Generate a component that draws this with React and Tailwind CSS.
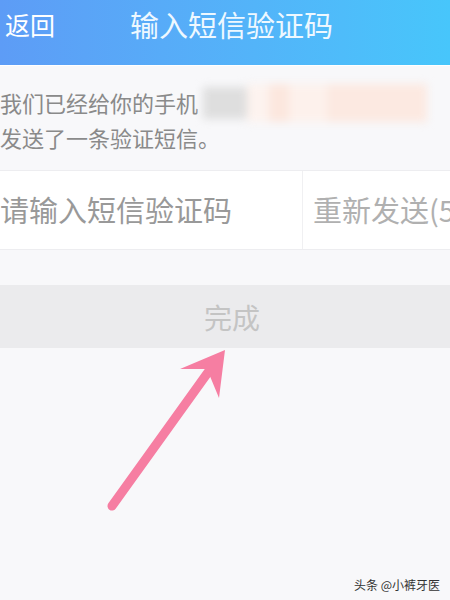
import React from 'react';

const FONT = { fontFamily: '"Noto Sans CJK SC", "Noto Sans", sans-serif' };

function Arrow() {
  // 粉色箭头指向“完成”按钮
  return (
    <svg className="absolute left-0 top-0" width="450" height="600" viewBox="0 0 450 600">
      <line x1="112" y1="506" x2="214" y2="364" stroke="#f67ea2" strokeWidth="9" strokeLinecap="round" />
      <path d="M225 350 L180 369 L207 369 L219 398 Z" fill="#f67ea2" />
    </svg>
  );
}

export default function App() {
  return (
    <div className="relative w-[450px] h-[600px] overflow-hidden bg-[#f8f8fa]" style={FONT}>
      {/* 顶部导航 */}
      <div className="h-[65px] bg-gradient-to-r from-[#5d9cf6] to-[#47c6fb] flex items-start pt-[6px]">
        <span className="w-[130px] pl-[5px] text-[25px] leading-[36px] text-white">返回</span>
        <span className="text-[29px] leading-[36px] text-[#eef8ff]">输入短信验证码</span>
      </div>
      <div className="h-px bg-white" />

      {/* 提示文字 */}
      <div className="h-[104px] pt-[19px] text-[22px] leading-[35px] text-[#8a8a8a]">
        <div className="flex items-center h-[35px]">
          <span className="shrink-0">我们已经给你的手机</span>
          <div className="flex items-center h-[35px] blur-[4px] ml-[5px]">
            <div className="w-[44px] h-[32px] bg-[#dedede]" />
            <div className="w-[22px] h-[38px] bg-[#fdf3ef]" />
            <div className="w-[20px] h-[38px] bg-[#fce7de]" />
            <div className="w-[38px] h-[38px] bg-[#fdf1ec]" />
            <div className="w-[100px] h-[38px] bg-[#fce9e1]" />
          </div>
        </div>
        <div>发送了一条验证短信。</div>
      </div>

      {/* 输入验证码 */}
      <div className="h-[80px] flex bg-white border-t border-b border-[#ededf0] overflow-hidden">
        <div className="w-[302px] shrink-0 flex items-center text-[29px] text-[#999999]">请输入短信验证码</div>
        <div className="w-px shrink-0 bg-[#f0f0f2]" />
        <div className="flex-1 flex items-center pl-[10px] text-[29px] text-[#b0b0b0] whitespace-nowrap overflow-hidden">
          重新发送(59)
        </div>
      </div>

      <div className="h-[35px]" />

      {/* 完成按钮 */}
      <div className="h-[63px] bg-[#ebebed] flex items-center justify-center text-[28px] text-[#c4c4c4] pl-[14px]">
        完成
      </div>

      <Arrow />

      {/* 水印 */}
      <div className="absolute right-[10px] bottom-[7px] text-[12px] leading-[16px] text-[#333333]">
        头条 @小裤牙医
      </div>
    </div>
  );
}
